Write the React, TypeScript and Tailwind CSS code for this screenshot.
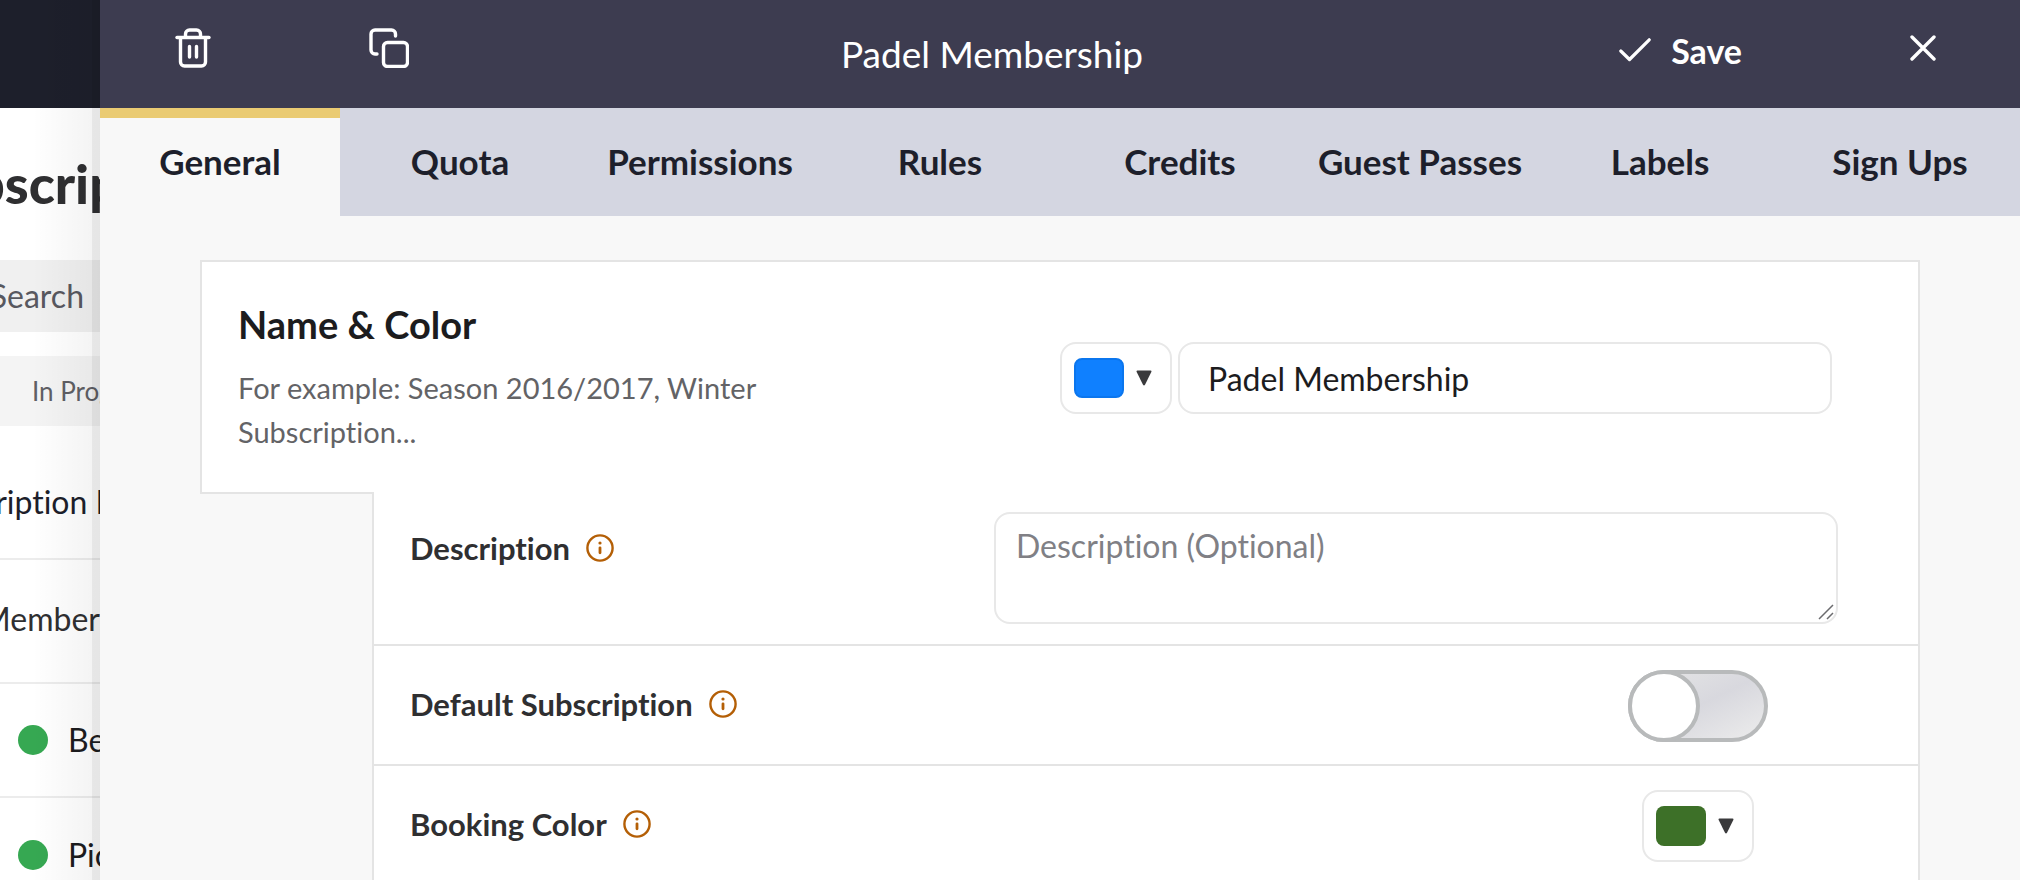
import React, { useState } from 'react';

const TABS = ['General', 'Quota', 'Permissions', 'Rules', 'Credits', 'Guest Passes', 'Labels', 'Sign Ups'];

const TrashIcon = () => (
  <svg className="h-10 w-9" viewBox="0 0 36 40" fill="none" stroke="currentColor" strokeWidth="3.4" strokeLinecap="round" strokeLinejoin="round">
    <path d="M2 9.5H34" />
    <path d="M10.500 9V6a4 4 0 0 1 4-4h7a4 4 0 0 1 4 4V9" />
    <path d="M5.500 10V34a4 4 0 0 0 4 4H26.500a4 4 0 0 0 4-4V10" />
    <path d="M14.500 18.500V29M21.500 18.500V29" />
  </svg>
);

const CopyIcon = () => (
  <svg className="size-10" viewBox="0 0 40 40" fill="none" stroke="currentColor" strokeWidth="3.4" strokeLinecap="round" strokeLinejoin="round">
    <rect x="14.500" y="14.500" width="24" height="24" rx="4" />
    <path d="M26.500 8V6a4 4 0 0 0-4-4H6A4 4 0 0 0 2 6V22a4 4 0 0 0 4 4H8" />
  </svg>
);

const InfoIcon = () => (
  <svg className="size-7" viewBox="0 0 28 28" fill="none" stroke="#b45f06" strokeWidth="2.4" strokeLinecap="round">
    <circle cx="14" cy="14" r="12.600" />
    <path d="M14 13.800V18.800" strokeWidth="2.800" />
    <circle cx="14" cy="9" r="1.600" fill="#b45f06" stroke="none" />
  </svg>
);

const Caret = () => (
  <svg className="size-4" viewBox="0 0 16 16" fill="#3a3a3c">
    <path d="M1.500 .5H14.500Q16 .5 15.300 2L9 14.800Q8 16.300 7 14.800L.7 2Q0 .5 1.500 .5Z" />
  </svg>
);

interface PickerProps {
  label: string;
  swatch: string;
}

const ColorPicker: React.FC<PickerProps> = ({ label, swatch }) => (
  <button type="button" aria-label={label} className="flex h-[72px] w-28 shrink-0 items-center gap-3 rounded-2xl border-2 border-[#e8e8e8] bg-white pl-3">
    <span className={`h-10 w-[50px] rounded-lg ${swatch}`} />
    <Caret />
  </button>
);

interface RowProps {
  label: string;
  htmlFor?: string;
  children: React.ReactNode;
}

const SettingRow: React.FC<RowProps> = ({ label, htmlFor, children }) => (
  <div className="flex min-h-[120px] items-center justify-between border-b-2 border-[#e4e4e4] pt-[2px] pl-9">
    <div className="flex items-center gap-4 pb-1">
      <label htmlFor={htmlFor} className="text-[31px] leading-10 font-bold text-[#2f2f31]">{label}</label>
      <InfoIcon />
    </div>
    {children}
  </div>
);

// List page that stays visible to the left of the drawer
const ListPage = () => (
  <aside className="relative w-[100px] shrink-0 overflow-hidden bg-white whitespace-nowrap">
    <div className="h-[108px] bg-[#1d1f2b]" />
    <div className="flex h-[152px] items-center justify-end">
      <h1 className="-mr-5 text-[54px] leading-none font-black text-[#2f2f31]">Subscrip</h1>
    </div>
    <div className="flex h-[72px] items-center justify-end bg-[#f0f0f0] pr-4 text-[32px] text-[#58585f]">Search</div>
    <div className="mt-6 flex h-[70px] items-center bg-[#f4f4f4] text-[26px] text-[#5f5f64]">
      <span className="h-14 w-[5px] rounded-r-xl bg-white shadow-sm" />
      <span className="pl-8">In Progress</span>
    </div>
    <div className="flex h-[134px] items-end justify-end border-b-2 border-[#ececec] pb-8 text-[32px] text-[#1d1f2b]">
      <span className="-mr-5">Subscription N</span>
    </div>
    <div className="flex h-[124px] items-center justify-end border-b-2 border-[#ececec] pb-1 text-[32px] text-[#2f2f31]">Member</div>
    <div className="flex h-[114px] items-center gap-5 border-b-2 border-[#ececec] pl-[18px] text-[32px] text-[#1c1c1e]">
      <span className="size-[30px] shrink-0 rounded-full bg-[#36a852]" />Beginner
    </div>
    <div className="flex h-[114px] items-center gap-5 pl-[18px] text-[32px] text-[#1c1c1e]">
      <span className="size-[30px] shrink-0 rounded-full bg-[#36a852]" />Pickleball
    </div>
    <div className="absolute inset-y-0 right-0 w-[68px] bg-linear-to-r from-black/0 to-black/5" />
    <div className="absolute inset-y-0 right-0 w-2 bg-black/5" />
  </aside>
);

export default function App() {
  const [activeTab, setActiveTab] = useState('General');
  const [name, setName] = useState('Padel Membership');
  const [isDefault, setIsDefault] = useState(false);

  return (
    <div className="flex h-screen overflow-hidden font-['Lato',sans-serif] [font-variant-ligatures:none]">
      <ListPage />

      <main className="flex min-w-0 flex-1 flex-col bg-[#f8f8f8]">
        <header className="grid h-[108px] shrink-0 grid-cols-[186px_206px_1fr_334px_194px] bg-[#3d3c50] text-white">
          <button type="button" aria-label="Delete" className="flex items-center justify-center pb-3"><TrashIcon /></button>
          <button type="button" aria-label="Duplicate" className="flex items-center justify-center pb-3"><CopyIcon /></button>
          <h2 className="flex items-center justify-center text-[37px]">Padel Membership</h2>
          <button type="button" className="flex items-center justify-end gap-5 pr-[84px] pb-2 text-[34px] font-bold">
            <svg className="h-6 w-8" viewBox="0 0 32 24" fill="none" stroke="currentColor" strokeWidth="3.200" strokeLinecap="round" strokeLinejoin="round">
              <path d="M1.800 13L10.500 21.500L30.200 1.800" />
            </svg>
            Save
          </button>
          <button type="button" aria-label="Close" className="flex items-center justify-center pb-3">
            <svg className="size-[26px]" viewBox="0 0 26 26" fill="none" stroke="currentColor" strokeWidth="3.400" strokeLinecap="round">
              <path d="M2 2L24 24M24 2L2 24" />
            </svg>
          </button>
        </header>

        <nav className="grid h-[108px] shrink-0 grid-cols-8 bg-[#d4d6e1]">
          {TABS.map(tab => (
            <button key={tab} type="button" onClick={() => setActiveTab(tab)}
              className={`border-t-[10px] pb-3 text-[35px] font-bold whitespace-nowrap text-[#1d1f2b] ${
                activeTab === tab ? 'border-[#eacb73] bg-[#f8f8f8]' : 'border-transparent'
              }`}>
              {tab}
            </button>
          ))}
        </nav>

        <form className="mx-[100px] mt-11">
          <section className="flex h-[232px] items-center justify-between border-x-2 border-t-2 border-[#e4e4e4] bg-white pt-[2px] pr-[86px] pl-9">
            <div className="w-[540px]">
              <h3 className="text-[38px] leading-[44px] font-bold text-[#1c1c1e]">Name &amp; Color</h3>
              <p className="mt-5 text-[29px] leading-[44px] text-[#636366]">For example: Season 2016/2017, Winter Subscription...</p>
            </div>
            <div className="flex w-[772px] gap-[6px]">
              <ColorPicker label="Subscription color" swatch="bg-[#0f80ff] border-2 border-[#0b76ee]" />
              <input aria-label="Name" value={name} onChange={e => setName(e.target.value)}
                className="h-[72px] min-w-0 flex-1 rounded-2xl border-2 border-[#e8e8e8] bg-white px-7 text-[32px] text-[#1c1c1e] outline-none" />
            </div>
          </section>

          <div className="flex">
            <div className="w-[10%] border-t-2 border-[#e4e4e4]" />
            <div className="flex-1 border-x-2 border-[#e4e4e4] bg-white">
              <div className="flex h-[154px] items-start justify-between border-b-2 border-[#e4e4e4] pt-5 pr-20 pl-9">
                <div className="flex items-center gap-4 pt-4">
                  <label htmlFor="description" className="text-[31px] leading-10 font-bold text-[#2f2f31]">Description</label>
                  <InfoIcon />
                </div>
                <div className="relative w-[844px]">
                  <textarea id="description" placeholder="Description (Optional)"
                    className="block h-28 w-full resize-none rounded-2xl border-2 border-[#e8e8e8] px-5 py-3 text-[32px] leading-10 outline-none placeholder:text-[#808085]" />
                  <svg className="pointer-events-none absolute right-1 bottom-1 size-4" viewBox="0 0 16 16" stroke="#6b6b6e" strokeWidth="1.500">
                    <path d="M1 15L15 1M9 15L15 9" />
                  </svg>
                </div>
              </div>
              <SettingRow label="Default Subscription" htmlFor="default-subscription">
                <input id="default-subscription" type="checkbox" role="switch" checked={isDefault} onChange={e => setIsDefault(e.target.checked)}
                  className="mr-[150px] flex h-[72px] w-[140px] appearance-none rounded-full border-4 border-[#b8babb] bg-linear-to-br from-[#e6e6e6] via-[#d8d8de] to-[#ececec] before:-m-1 before:size-[72px] before:rounded-full before:border-4 before:border-[#b8babb] before:bg-white checked:justify-end" />
              </SettingRow>
              <SettingRow label="Booking Color">
                <div className="mr-[164px] flex">
                  <ColorPicker label="Booking color" swatch="bg-[#3d7028]" />
                </div>
              </SettingRow>
            </div>
          </div>
        </form>
      </main>
    </div>
  );
}
